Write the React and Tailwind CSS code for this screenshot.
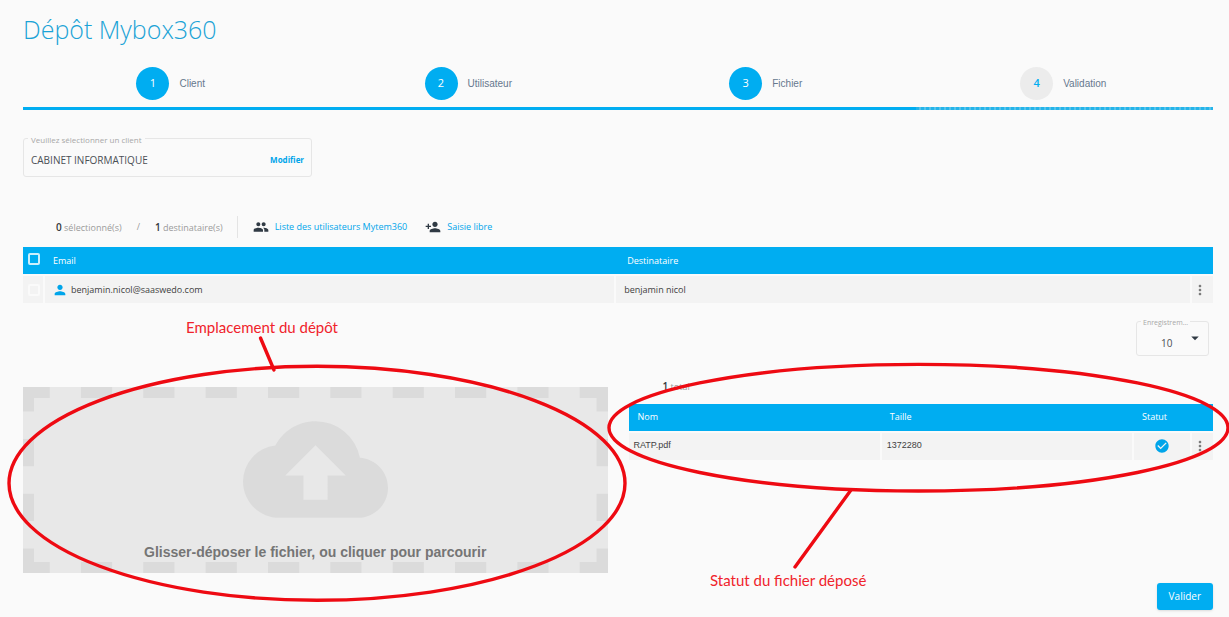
import { MdArrowDropDown, MdCheckCircle, MdCloudUpload, MdMoreVert, MdPeople, MdPerson, MdPersonAdd } from "react-icons/md";

const steps = [
  { id: 1, label: "Client", done: true },
  { id: 2, label: "Utilisateur", done: true },
  { id: 3, label: "Fichier", done: true },
  { id: 4, label: "Validation", done: false },
];

const recipients = [{ email: "benjamin.nicol@saaswedo.com", name: "benjamin nicol" }];

const files = [{ name: "RATP.pdf", size: "1372280" }];

function Stepper() {
  return (
    <nav aria-label="Étapes">
      <ol className="grid grid-cols-4">
        {steps.map((step) => (
          <li key={step.id}>
            <div className="flex h-10 items-start justify-center gap-2.5 pr-0.5">
              <span
                className={
                  step.done
                    ? "flex size-[33px] items-center justify-center rounded-full bg-[#00adf1] text-[11px] font-medium text-white"
                    : "flex size-[33px] items-center justify-center rounded-full bg-[#ececec] text-[11px] font-semibold text-[#00adf1]"
                }
              >
                {step.id}
              </span>
              <span className="font-['Liberation_Sans',sans-serif] text-[10px] leading-[34px] text-[#66788e]">{step.label}</span>
            </div>
            <div
              className={
                step.done
                  ? "h-[3px] bg-[#00adf1]"
                  : "h-[3px] bg-[repeating-linear-gradient(90deg,#24b4ea_0_3px,#55c2ea_3px_5px)]"
              }
            />
          </li>
        ))}
      </ol>
    </nav>
  );
}

function ClientField() {
  return (
    <fieldset className="w-[289px] rounded-[3px] border border-[#e6e6e6] px-1 pt-0.5 pb-1">
      <legend className="px-[3px] pt-1 text-[8px] leading-3 text-[#a8a8a8]">
        <label htmlFor="client">Veuillez sélectionner un client</label>
      </legend>
      <div className="flex h-6 items-center justify-between px-[3px]">
        <input
          id="client"
          readOnly
          defaultValue="CABINET INFORMATIQUE"
          className="min-w-0 flex-1 text-[10px] text-[#4a4f55] outline-none"
        />
        <button type="button" className="text-[8px] font-bold text-[#00a5ea]">
          Modifier
        </button>
      </div>
    </fieldset>
  );
}

function Toolbar() {
  return (
    <div className="flex h-[22px] items-center pl-[33px] text-[9px] text-[#9b9b9b]">
      <p>
        <b className="text-[10px] font-semibold text-[#33383d]">0</b> sélectionné(s)
      </p>
      <span className="px-[15px]">/</span>
      <p>
        <b className="text-[10px] font-semibold text-[#33383d]">1</b> destinataire(s)
      </p>
      <div className="ml-3.5 flex h-full items-center gap-[18px] border-l border-[#e4e4e4] pl-[15px] text-[#00a5ea]">
        <button type="button" className="flex items-center gap-1.5">
          <MdPeople className="size-4 text-[#303a44]" />
          Liste des utilisateurs Mytem360
        </button>
        <button type="button" className="flex items-center gap-1.5">
          <MdPersonAdd className="size-4 text-[#303a44]" />
          Saisie libre
        </button>
      </div>
    </div>
  );
}

function Checkbox({ label, light }) {
  return (
    <input
      type="checkbox"
      aria-label={label}
      className={
        light
          ? "block size-3 appearance-none rounded-[2px] border-2 border-white/80"
          : "block size-3 appearance-none rounded-[2px] border-2 border-[#fafafa]"
      }
    />
  );
}

function MenuButton() {
  return (
    <button type="button" aria-label="Actions" className="flex w-full text-[#7a7a7a]">
      <MdMoreVert className="size-4" />
    </button>
  );
}

function RecipientsTable() {
  return (
    <table className="w-full table-fixed text-left text-[9px]">
      <colgroup>
        <col className="w-[21px]" />
        <col className="w-[48%]" />
        <col />
        <col className="w-[22px]" />
      </colgroup>
      <thead className="bg-[#00adf1] text-white">
        <tr className="h-7">
          <th className="pb-1 pl-[5px]">
            <Checkbox label="Tout sélectionner" light />
          </th>
          <th className="pl-[9px] font-normal">Email</th>
          <th className="pl-3 font-normal">Destinataire</th>
          <th />
        </tr>
      </thead>
      <tbody className="bg-[#f3f3f3] text-[#3f3f3f]">
        {recipients.map((recipient) => (
          <tr key={recipient.email} className="h-7 border-t-2 border-[#fafafa]">
            <td className="pl-[5px]">
              <Checkbox label={recipient.email} />
            </td>
            <td className="border-l-2 border-[#fafafa] pl-[7px]">
              <span className="flex items-center gap-[3px]">
                <MdPerson className="size-4 text-[#00a5ea]" />
                {recipient.email}
              </span>
            </td>
            <td className="border-l-2 border-[#fafafa] pl-2">{recipient.name}</td>
            <td className="border-l-2 border-[#fafafa]">
              <MenuButton />
            </td>
          </tr>
        ))}
      </tbody>
    </table>
  );
}

function PageSize() {
  return (
    <fieldset className="w-[73px] rounded-[3px] border border-[#e6e6e6] px-1">
      <legend className="px-0.5 pt-1 text-[7px] leading-3 text-[#a8a8a8]">
        <label htmlFor="page-size">Enregistrem...</label>
      </legend>
      <div className="relative">
        <select id="page-size" className="h-[22px] w-full appearance-none pl-5 text-[10px] text-[#4a4f55]">
          <option>10</option>
        </select>
        <MdArrowDropDown className="pointer-events-none absolute top-0 right-0 size-[18px] text-[#303a44]" />
      </div>
    </fieldset>
  );
}

function DropZone() {
  return (
    <label className="relative flex h-[186px] flex-col items-center bg-[#e8e8e8] pt-2.5 font-['Liberation_Sans',sans-serif] text-[14px] font-bold text-[#757575]">
      {/* pathLength keeps the dashes symmetric whatever the width */}
      <svg className="absolute inset-0 size-full" stroke="#dbdbdb" strokeWidth="22">
        <line x1="0" y1="0" x2="100%" y2="0" pathLength="585" strokeDasharray="31.2" strokeDashoffset="4.4" />
        <line x1="0" y1="100%" x2="100%" y2="100%" pathLength="585" strokeDasharray="31.2" strokeDashoffset="4.4" />
        <line x1="0" y1="0" x2="0" y2="100%" pathLength="186" strokeDasharray="27.4" strokeDashoffset="2.9" />
        <line x1="100%" y1="0" x2="100%" y2="100%" pathLength="186" strokeDasharray="27.4" strokeDashoffset="2.9" />
      </svg>
      <MdCloudUpload className="size-[145px] shrink-0 text-[#dbdbdb]" />
      <span className="relative leading-5">Glisser-déposer le fichier, ou cliquer pour parcourir</span>
      <input type="file" className="sr-only" />
    </label>
  );
}

function FilesTable() {
  return (
    <table className="w-full table-fixed text-left text-[9px]">
      <colgroup>
        <col />
        <col />
        <col className="w-[58px]" />
        <col className="w-[22px]" />
      </colgroup>
      <thead className="bg-[#00adf1] text-white">
        <tr className="h-7">
          <th className="pl-[9px] font-normal">Nom</th>
          <th className="pl-[9px] font-normal">Taille</th>
          <th className="pl-[9px] font-normal">Statut</th>
          <th />
        </tr>
      </thead>
      <tbody className="bg-[#f3f3f3] font-['Liberation_Sans',sans-serif] text-[#3f3f3f]">
        {files.map((file) => (
          <tr key={file.name} className="h-7 border-t-2 border-[#fafafa]">
            <td className="pl-[5px]">{file.name}</td>
            <td className="border-l-2 border-[#fafafa] pl-[5px]">{file.size}</td>
            <td className="border-l-2 border-[#fafafa]">
              <MdCheckCircle className="mx-auto size-4 text-[#00a5ea]" />
            </td>
            <td className="border-l-2 border-[#fafafa]">
              <MenuButton />
            </td>
          </tr>
        ))}
      </tbody>
    </table>
  );
}

function Annotations() {
  return (
    <div className="pointer-events-none absolute top-0 left-0 font-['Lato',sans-serif] text-[15px] leading-5 text-[#f0232b]">
      <svg width="1229" height="617" fill="none" stroke="#ee0a12" strokeWidth="3.4" strokeLinecap="round">
        <ellipse cx="317" cy="483.3" rx="308" ry="117" />
        <line x1="260.5" y1="338" x2="274" y2="370" />
        <ellipse cx="918.5" cy="427.7" rx="309.5" ry="63.3" />
        <line x1="851" y1="490" x2="795" y2="567" />
      </svg>
      <span className="absolute top-[317px] left-[186px] whitespace-nowrap">Emplacement du dépôt</span>
      <span className="absolute top-[570px] left-[710px] whitespace-nowrap">Statut du fichier déposé</span>
    </div>
  );
}

export default function App() {
  return (
    <main className="relative min-h-screen overflow-hidden bg-[#fafafa] pt-[11px] pr-4 pb-2 pl-[23px] font-['Open_Sans',sans-serif]">
      <h1 className="text-[25px] leading-9 font-light text-[#1ba3d6]">Dépôt Mybox360</h1>
      <div className="mt-5">
        <Stepper />
      </div>
      <div className="mt-5">
        <ClientField />
      </div>
      <div className="mt-[39px] mb-[9px]">
        <Toolbar />
      </div>
      <RecipientsTable />
      <div className="mt-2.5 flex justify-end pr-1">
        <PageSize />
      </div>
      <div className="mt-[22px] grid grid-cols-2 gap-[21px]">
        <div className="mt-[9px]">
          <DropZone />
        </div>
        <section>
          <p className="mb-[9px] pl-[34px] text-[9px] leading-4 text-[#9b9b9b]">
            <b className="text-[10px] font-semibold text-[#33383d]">1</b> total
          </p>
          <FilesTable />
        </section>
      </div>
      <div className="mt-2.5 flex justify-end">
        <button type="button" className="h-[27px] rounded-[3px] bg-[#00adf1] px-3 text-[10px] text-white shadow">
          Valider
        </button>
      </div>
      <Annotations />
    </main>
  );
}
